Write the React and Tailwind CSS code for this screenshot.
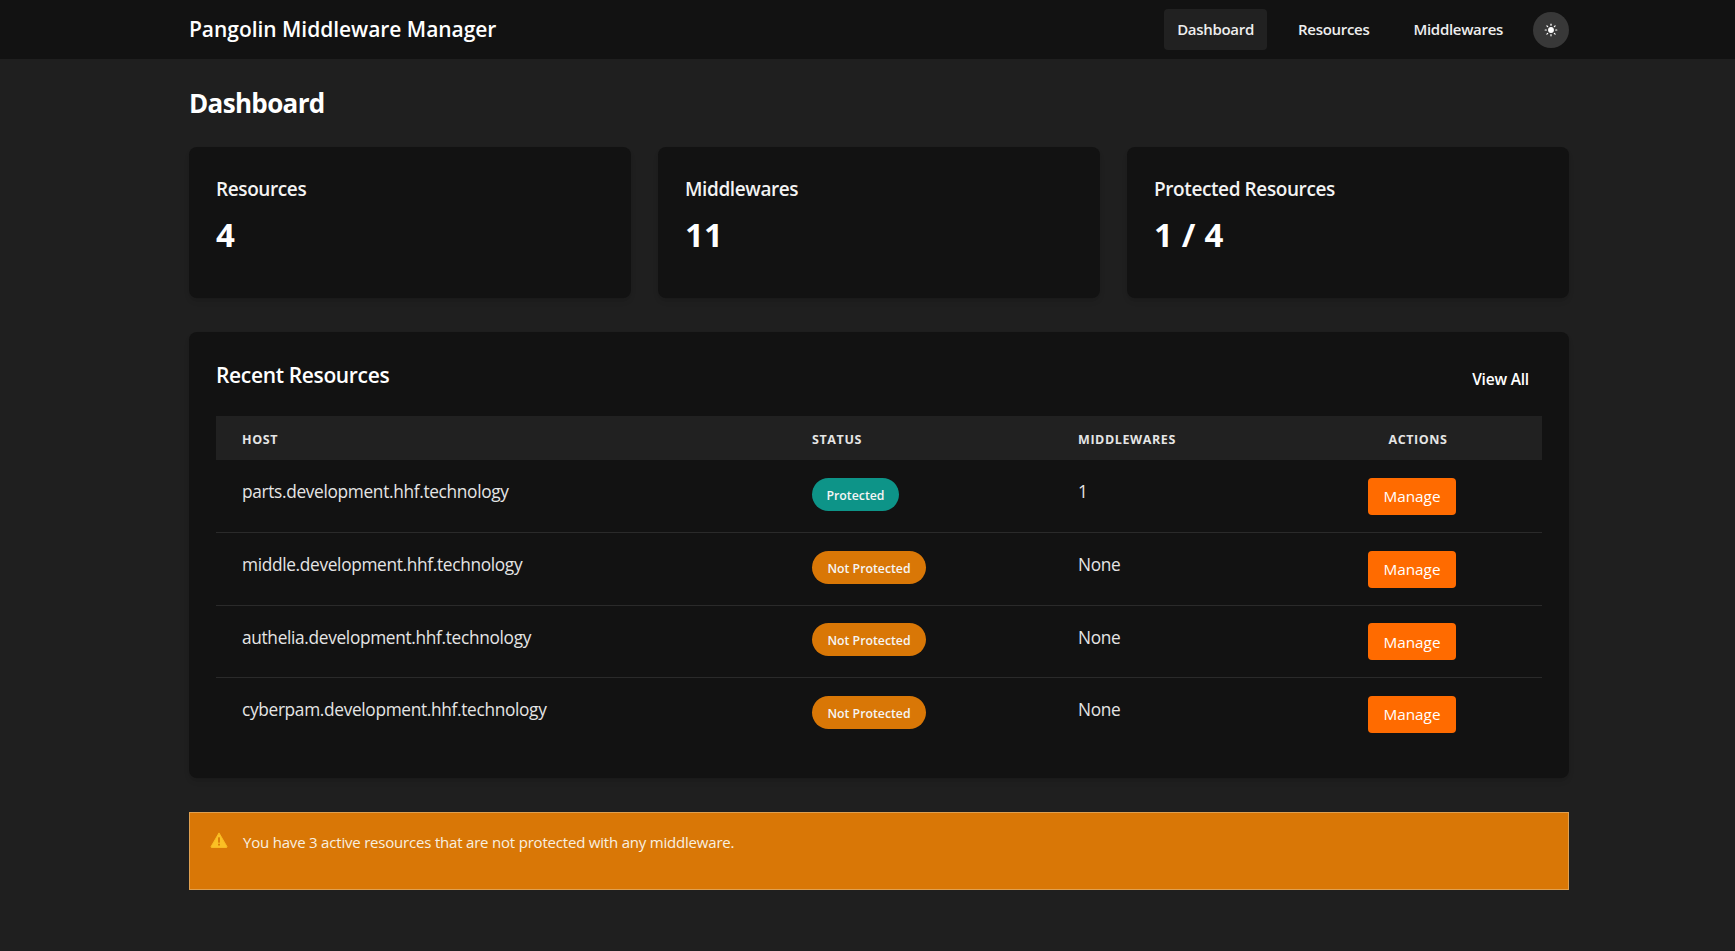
import { Sun } from "lucide-react";

const FONT = { fontFamily: '"Open Sans", "Noto Sans", sans-serif' };

const STATS = [
  { label: "Resources", value: "4" },
  { label: "Middlewares", value: "11" },
  { label: "Protected Resources", value: "1 / 4" },
];

const ROWS = [
  { host: "parts.development.hhf.technology", protectedRes: true, middlewares: "1" },
  { host: "middle.development.hhf.technology", protectedRes: false, middlewares: "None" },
  { host: "authelia.development.hhf.technology", protectedRes: false, middlewares: "None" },
  { host: "cyberpam.development.hhf.technology", protectedRes: false, middlewares: "None" },
];

function WarningIcon() {
  return (
    <svg viewBox="0 0 20 18" className="w-[18px] h-[16px] shrink-0" aria-hidden="true">
      <path d="M10 1 L19 16.5 a0.6 0.6 0 0 1 -0.5 0.8 H1.5 a0.6 0.6 0 0 1 -0.5 -0.8 Z" fill="#fbbf24" stroke="#fbbf24" strokeLinejoin="round" strokeWidth="1" />
      <rect x="9" y="6" width="2" height="6" fill="#d97706" />
      <rect x="9" y="13.2" width="2" height="2" fill="#d97706" />
    </svg>
  );
}

function StatCard({ label, value }) {
  return (
    <div className="bg-[#121212] rounded-lg shadow-md h-[151px] p-[27px] pt-[30px]">
      <div className="text-[19px] leading-[24px] font-semibold text-[#f3f3f3] tracking-[-0.4px]">{label}</div>
      <div className="mt-[14px] text-[33px] leading-[40px] font-bold text-white tracking-[0.2px]">{value}</div>
    </div>
  );
}

export default function App() {
  return (
    <div className="min-h-screen bg-[#1f1f1f] text-white" style={FONT}>
      <header className="bg-[#121212] h-[59px]">
        <div className="w-[1380px] ml-[189px] h-full flex items-center justify-between">
          <div className="pt-[1px] text-[21px] font-semibold tracking-[-0.04px]">Pangolin Middleware Manager</div>
          <nav className="flex items-center text-[15px] font-semibold tracking-[-0.3px] text-[#eeeeee]">
            <a className="w-[103px] h-[41px] flex items-center justify-center rounded bg-[#212121]">Dashboard</a>
            <a className="ml-[31px]">Resources</a>
            <a className="ml-[44px]">Middlewares</a>
            <button className="ml-[30px] w-[36px] h-[36px] rounded-full bg-[#383838] flex items-center justify-center">
              <Sun className="w-[14px] h-[14px] fill-white text-white" />
            </button>
          </nav>
        </div>
      </header>

      <main className="w-[1380px] ml-[189px]">
        <h1 className="pt-[20px] text-[26px] leading-[48px] font-bold tracking-[-0.65px]">Dashboard</h1>

        <div className="mt-[20px] grid grid-cols-3 gap-[27px]">
          {STATS.map(s => <StatCard key={s.label} label={s.label} value={s.value} />)}
        </div>

        <section className="mt-[34px] bg-[#121212] rounded-lg shadow-md h-[446px] px-[27px] pt-[27px]">
          <div className="flex items-start justify-between h-[57px]">
            <h2 className="text-[21px] leading-[32px] font-semibold tracking-[-0.35px]">Recent Resources</h2>
            <a className="mt-[7px] mr-[13px] text-[15.5px] leading-[26px] font-semibold tracking-[-0.2px]">View All</a>
          </div>

          <table className="w-[1326px] table-fixed border-collapse">
            <thead>
              <tr className="bg-[#212121] h-[44px] text-[12.5px] font-semibold tracking-[0.6px] text-[#e5e5e5]">
                <th className="w-[569px] pl-[26px] pt-[4px] text-left">HOST</th>
                <th className="w-[266px] pl-[27px] pt-[4px] text-left">STATUS</th>
                <th className="w-[243px] pl-[27px] pt-[4px] text-left">MIDDLEWARES</th>
                <th className="pt-[4px] text-center">ACTIONS</th>
              </tr>
            </thead>
            <tbody>
              {ROWS.map((r, i) => (
                <tr key={r.host} className={i < ROWS.length - 1 ? "h-[72.6px] border-b border-[#2a2a2a]" : "h-[72.6px]"}>
                  <td className="pl-[26px] pb-[8px] text-[17.3px] text-[#e5e5e5] tracking-[-0.33px]">{r.host}</td>
                  <td className="pl-[27px] pb-[3px]">
                    <span className={"inline-flex items-center justify-center h-[33px] pt-[3px] rounded-full text-[12.3px] font-semibold text-[#f5f5f5] " + (r.protectedRes ? "w-[87px] bg-[#0d9488]" : "w-[114px] bg-[#d97706]")}>
                      {r.protectedRes ? "Protected" : "Not Protected"}
                    </span>
                  </td>
                  <td className="pl-[27px] pb-[8px] text-[17.3px] text-[#e5e5e5] tracking-[-0.33px]">{r.middlewares}</td>
                  <td className="pt-[1px] text-center">
                    <button className="w-[88px] h-[37px] mr-[12px] rounded bg-[#ff6b00] text-[15.3px] font-medium text-white">Manage</button>
                  </td>
                </tr>
              ))}
            </tbody>
          </table>
        </section>

        <div className="mt-[34px] h-[78px] bg-[#d97706] border border-[#e0a050] flex items-start pl-[20px] pt-[19px] gap-[15px]">
          <WarningIcon />
          <span className="text-[15px] leading-[20px] text-[#f8f0e0] tracking-[-0.2px]">You have 3 active resources that are not protected with any middleware.</span>
        </div>
      </main>
    </div>
  );
}
